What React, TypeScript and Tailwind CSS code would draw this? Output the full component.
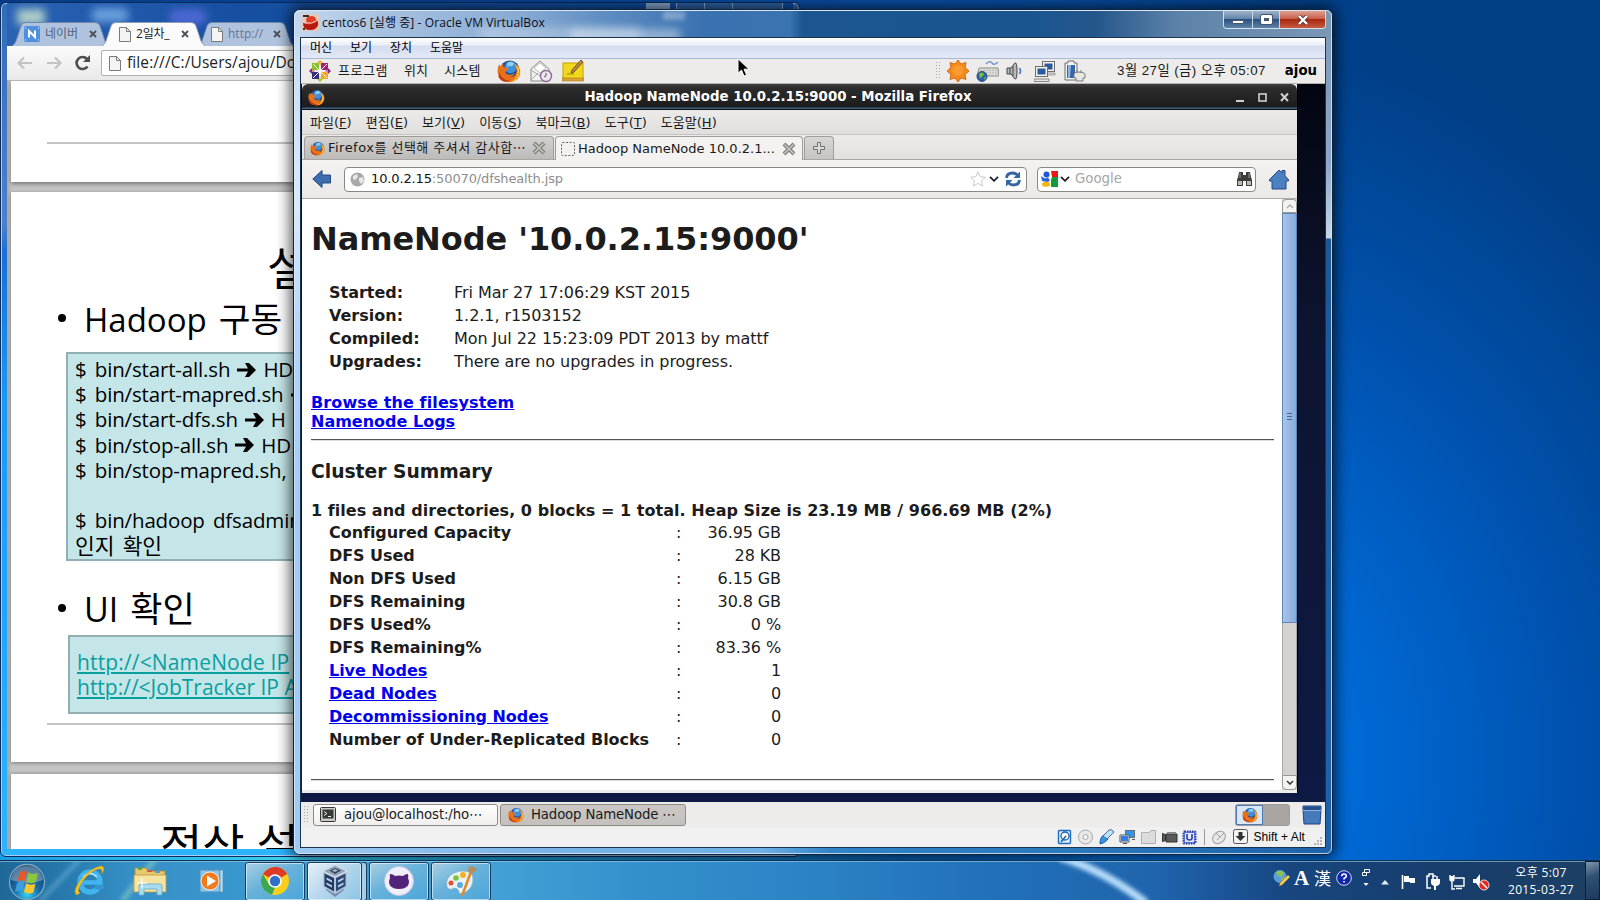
import React from "react";

const FirefoxIcon = ({ s }: { s: number }) => (
  <svg width={s} height={s} viewBox="0 0 32 32" className="shrink-0">
    <circle cx="17" cy="15" r="13" fill="#1d4f9c" />
    <circle cx="18" cy="11" r="8" fill="#3f8fdc" />
    <path d="M14 5q6-3 9 1l-3 4-4-1-3 3z" fill="#8fd0f5" />
    <path d="M3 7l2 3 3-4 1 5q5 0 6 3l-4 3q1 4 6 4 4 0 6-3-1 6-7 6 8 1 10-7 1-6-3-11 8 4 8 12-1 12-14 13Q4 31 1 19 0 12 3 7z" fill="#e8711a" />
    <path d="M23 6q8 5 7 13-2 10-12 12 9-5 9-14 0-6-4-11z" fill="#fbb829" />
    <path d="M3 18q3 10 14 11-10 4-15-5z" fill="#c23b12" />
  </svg>
);

const PageIcon = () => (
  <svg width="12" height="15" viewBox="0 0 12 15" className="shrink-0">
    <path d="M.5.5h7l4 4v10H.5z" fill="#f4f4f4" stroke="#7a7a7a" />
    <path d="M7.500.5v4h4" fill="none" stroke="#7a7a7a" />
  </svg>
);

const TabX = () => (
  <svg width="8" height="8" viewBox="0 0 8 8" className="shrink-0">
    <path d="M1 1l6 6M7 1L1 7" stroke="#4c4f55" strokeWidth="1.800" />
  </svg>
);

const ChromeTab = ({ w, active, children, className = "" }: { w: number; active?: boolean; children: React.ReactNode; className?: string }) => (
  <div className={"relative flex h-6 shrink-0 items-center " + className} style={{ width: w }}>
    <svg className="absolute inset-0" width={w} height="24" viewBox={`0 0 ${w} 24`}>
      <path
        d={`M0 24Q3 22 4 19L9 4Q10 .5 14 .5H${w - 14}Q${w - 10} .5 ${w - 9} 4L${w - 4} 19Q${w - 3} 22 ${w} 24`}
        fill={active ? "#fbfbfb" : "#afc3de"}
        stroke={active ? "#8a9cb8" : "#7088ad"}
      />
    </svg>
    <div className="relative flex w-full items-center">{children}</div>
  </div>
);

const FFX = () => (
  <svg width="14" height="14" viewBox="0 0 14 14" className="shrink-0">
    <path d="M2 2l10 10M12 2L2 12" stroke="#80807c" strokeWidth="4" />
    <path d="M2.500 2.500l9 9M11.500 2.500l-9 9" stroke="#c4c4c1" strokeWidth="1.600" />
  </svg>
);

const Chevron = () => (
  <svg width="10" height="6" viewBox="0 0 10 6" className="shrink-0">
    <path d="M1 .8l4 4 4-4" fill="none" stroke="#222" strokeWidth="1.800" />
  </svg>
);

const Grip = () => (
  <svg width="6" height="18" viewBox="0 0 6 18" className="shrink-0">
    {[0, 3, 6, 9, 12, 15].map((y) => (
      <path key={y} d={`M0 ${y + 0.5}h1M3 ${y + 0.5}h1`} stroke="#a9a7a3" />
    ))}
  </svg>
);

const CentosLogo = () => (
  <svg width="22" height="22" viewBox="0 0 22 22" className="shrink-0">
    <path d="M11 0l3 3-3 3-3-3z" fill="#efa724" />
    <path d="M22 11l-3-3-3 3 3 3z" fill="#932279" />
    <path d="M11 22l3-3-3-3-3 3z" fill="#9ccd2a" />
    <path d="M0 11l3-3 3 3-3 3z" fill="#932279" />
    <path d="M3 3h7v7H3z" fill="#8cc02c" />
    <path d="M12 3h7v7h-7z" fill="#a3247f" />
    <path d="M3 12h7v7H3z" fill="#34307f" />
    <path d="M12 12h7v7h-7z" fill="#efa724" />
    <path d="M4 4l14 14M18 4L4 18M11 3v16M3 11h16" stroke="#f5f3ef" strokeWidth="1" />
  </svg>
);

const MailIcon = () => (
  <svg width="23" height="23" viewBox="0 0 23 23" className="shrink-0">
    <path d="M1 9L10 1l9 8v12H1z" fill="#f2f2f0" stroke="#8a8a86" />
    <path d="M4 8l6-5 6 5-6 5z" fill="#fff" stroke="#bdbdb8" />
    <path d="M1 20l7-7M1 10l9 6 4-3" fill="none" stroke="#a6a6a0" />
    <circle cx="16" cy="16" r="5.500" fill="#eee6ee" stroke="#8d6a97" strokeWidth="1.400" />
    <path d="M16 13v3l-2 1" fill="none" stroke="#555" />
  </svg>
);

const NoteIcon = () => (
  <svg width="22" height="22" viewBox="0 0 22 22" className="shrink-0">
    <rect x="1" y="3" width="20" height="16" fill="#f1d81c" stroke="#c4a000" />
    <rect x="0.500" y="18" width="21" height="3" fill="#d9a432" stroke="#a4761c" strokeWidth=".6" />
    <path d="M19 0l2 2-9 10-3 1 1-3z" fill="#b98a4a" stroke="#5c3d14" strokeWidth=".8" />
    <path d="M5 14h7" stroke="#9b8500" />
  </svg>
);

const SunIcon = () => (
  <svg width="22" height="22" viewBox="0 0 22 22" className="shrink-0">
    <path d="M11 0l3 4 5-1.500-.8 5L22 11l-3.800 3.500.8 5-5-1.500-3 4-3-4-5 1.500.8-5L0 11l3.800-3.500L3 2.500 8 4z" fill="#f58a1c" stroke="#c75f06" strokeWidth=".8" />
    <circle cx="11" cy="10.500" r="5.500" fill="#fb9a30" />
  </svg>
);

const KeyboardIcon = () => (
  <svg width="23" height="22" viewBox="0 0 23 22" className="shrink-0">
    <path d="M10 4q4-4 6-1t6-1" fill="none" stroke="#6f9bd0" strokeWidth="1.500" />
    <path d="M3 8h19l1 8H1z" fill="#dcdcd8" stroke="#8a8a86" />
    <path d="M4 10.500h17M4 13h17" stroke="#b4b4b0" strokeDasharray="2 1" />
    <circle cx="6" cy="16.500" r="5" fill="#2b62ae" stroke="#173c74" strokeWidth=".8" />
    <path d="M3 14q3-3 5 0l-2 3-2 1zM8 18l2-2-1 4z" fill="#7fc03a" />
  </svg>
);

const SpeakerIcon = () => (
  <svg width="17" height="20" viewBox="0 0 17 20" className="shrink-0">
    <path d="M1 7h4l4-5q2-1 2 8t-2 8l-4-5H1z" fill="#b8bab5" stroke="#44474a" />
    <path d="M4 7v6M7 5v10" stroke="#44474a" />
    <path d="M13.500 7q2 3 0 6" fill="none" stroke="#4b7fc4" strokeWidth="1.600" />
  </svg>
);

const MonitorsIcon = () => (
  <svg width="22" height="22" viewBox="0 0 22 22" className="shrink-0">
    <rect x="8.500" y="1.500" width="12" height="10" fill="#f3f3f1" stroke="#6c6e6a" />
    <rect x="10.500" y="3.500" width="8" height="6" fill="#2c5aa0" />
    <path d="M12 13h9v2h-9z" fill="#d5d5d0" stroke="#7c7e7a" strokeWidth=".6" />
    <rect x="1.500" y="6.500" width="12" height="10" fill="#f3f3f1" stroke="#6c6e6a" />
    <rect x="3.500" y="8.500" width="8" height="6" fill="#2c5aa0" />
    <path d="M0 19h15v2.500H0z" fill="#e6e6e2" stroke="#6c6e6a" strokeWidth=".8" />
  </svg>
);

const BatteryIcon = () => (
  <svg width="22" height="22" viewBox="0 0 22 22" className="shrink-0">
    <path d="M4 1h6v2h3v17H1V3h3z" fill="#f3f3f1" stroke="#6c6e6a" />
    <rect x="3" y="5" width="8" height="13" fill="#3465a4" />
    <path d="M4 5h3l-1 13H4z" fill="#8fb4e0" />
    <path d="M13 10v3M17 10v3M10 14q0-2 5-2t6 2v4h-2v3h-7v-3h-2z" fill="#e6e6e2" stroke="#7c7e7a" />
  </svg>
);

const Arrow = () => (
  <svg width="19" height="16" viewBox="0 0 19 16" className="mx-[7px] shrink-0">
    <path d="M0 6.500h11L8 1h4l7 7-7 7H8l3-5.500H0z" fill="#000" />
  </svg>
);

const ChromeWindow = () => (
  <div className="absolute left-0 top-[2px] flex h-[855px] w-[800px] flex-col overflow-hidden rounded-[6px] border border-[#0b2c5c] bg-[linear-gradient(180deg,#2f6bb8_0,#3b72bb_60px,#4a82cc_220px,#176fdb_250px,#189af2_400px,#1fa8ff_650px,#2cb4ff_100%)] px-[6px] pb-[7px] shadow-[inset_0_0_0_1px_#a8cdf2]">
    <div className="relative flex h-[43px] shrink-0 items-end bg-[linear-gradient(90deg,#2a63b4,#164fa0_30%,#0f4fa8)] pl-[5px]">
      <div className="absolute left-[10px] top-[6px] h-[16px] w-[28px] bg-[#cfe8d0] opacity-80 blur-[4px]" />
      <div className="absolute left-[84px] top-[5px] h-[14px] w-[38px] rounded-full bg-[#7fb2ea] opacity-80 blur-[4px]" />
      <div className="absolute left-[162px] top-[6px] h-[16px] w-[38px] rounded-full bg-[#5a6ee0] opacity-80 blur-[4px]" />
      <ChromeTab w={97}>
        <svg width="16" height="16" viewBox="0 0 16 16" className="ml-[12px] shrink-0">
          <rect width="16" height="16" rx="1.500" fill="#4e90df" />
          <path d="M5 11.500V5l6 6V4.500" fill="none" stroke="#fff" strokeWidth="2" />
          <path d="M1 2h1M14 2h1M1 14h1M14 14h1" stroke="#fff" />
        </svg>
        <span className="ml-[5px] w-[35px] overflow-hidden whitespace-nowrap font-['Open_Sans','Noto_Sans_CJK_KR',sans-serif] text-[12px] leading-[16px] text-[#55627a]">네이버</span>
        <span className="ml-[9px] flex"><TabX /></span>
      </ChromeTab>
      <ChromeTab w={103} active className="z-10 -ml-[7px]">
        <span className="ml-[17px] flex"><PageIcon /></span>
        <span className="ml-[5px] w-[38px] overflow-hidden whitespace-nowrap font-['Open_Sans','Noto_Sans_CJK_KR',sans-serif] text-[12px] leading-[16px] tracking-[-0.2px] text-[#222]">2일차_</span>
        <span className="ml-[7px] flex"><TabX /></span>
      </ChromeTab>
      <ChromeTab w={96} className="-ml-[7px]">
        <span className="ml-[13px] flex"><PageIcon /></span>
        <span className="ml-[5px] w-[38px] overflow-hidden whitespace-nowrap font-['Open_Sans','Noto_Sans_CJK_KR',sans-serif] text-[12px] leading-[16px] text-[#66748c]">http://</span>
        <span className="ml-[7px] flex"><TabX /></span>
      </ChromeTab>
      <div className="absolute right-[10px] top-0 flex h-[17px] gap-[6px]">
        <div className="w-[24px] border border-t-0 border-[#8fb0d8] bg-[#8aa9d0]" />
        <div className="flex w-[107px] divide-x divide-[#8fb0d8] rounded-b border border-t-0 border-[#8fb0d8] bg-[#2f66aa]">
          <div className="w-[28px]" />
          <div className="w-[28px]" />
          <div className="flex-1" />
        </div>
      </div>
    </div>
    <div className="flex h-[35px] shrink-0 items-center border-b border-[#b6b6b6] bg-[linear-gradient(180deg,#fbfbfb,#e9e9e9)] pl-[10px]">
      <svg width="16" height="14" viewBox="0 0 16 14"><path d="M15 7H2M7 1.500L1.500 7 7 12.500" fill="none" stroke="#c2c2c2" strokeWidth="2.200" /></svg>
      <svg width="16" height="14" viewBox="0 0 16 14" className="ml-[13px]"><path d="M1 7h13M9 1.500L14.500 7 9 12.500" fill="none" stroke="#c2c2c2" strokeWidth="2.200" /></svg>
      <svg width="17" height="16" viewBox="0 0 17 16" className="ml-[12px]"><path d="M13.500 11.500A6 6 0 1 1 13 4" fill="none" stroke="#4d4d4d" strokeWidth="2.600" /><path d="M16 0v7H9z" fill="#4d4d4d" /></svg>
      <div className="ml-[10px] flex h-[26px] flex-1 items-center rounded-[2px] border border-[#b0b0b0] bg-white pl-[7px]">
        <PageIcon />
        <span className="ml-[6px] whitespace-nowrap font-['Open_Sans','Noto_Sans_CJK_KR',sans-serif] text-[15.500px] tracking-[0.1px] text-[#222]">file:///C:/Users/ajou/Do</span>
      </div>
    </div>
    <div className="flex min-h-0 flex-1 flex-col overflow-hidden bg-[linear-gradient(90deg,#a9a9a9,#c6c6c6_5px)] pl-[4px] font-['Open_Sans','Noto_Sans_CJK_KR',sans-serif] text-black">
      <div className="h-[101px] shrink-0 bg-white pl-[36px] pt-[61px] shadow-[0_2px_4px_#777]">
        <div className="h-[2px] bg-[#c4c4c4]" />
      </div>
      <div className="mt-[10px] flex h-[570px] shrink-0 flex-col bg-white shadow-[0_1px_4px_#777]">
        <div className="ml-[256px] mt-[47px] h-[56px] whitespace-nowrap text-[46px] leading-[56px]">설</div>
        <div className="mt-[2px] flex h-[44px] items-center pl-[47px]">
          <div className="mb-[2px] h-[8px] w-[8px] shrink-0 rounded-full bg-black" />
          <span className="ml-[18px] whitespace-nowrap text-[33px] leading-[44px]">Hadoop<span className="ml-[12px] text-[34.500px]">구동</span></span>
        </div>
        <div className="ml-[55px] mt-[11px] h-[209px] border-2 border-[#92b0b4] bg-[#c5e6e8] pl-[7px] pt-[3px] text-[20.500px] leading-[25.200px] tracking-[-0.15px] [word-spacing:3px]">
          <div className="flex items-center whitespace-pre">$ bin/start-all.sh<Arrow />HD</div>
          <div className="flex items-center whitespace-pre">$ bin/start-mapred.sh<Arrow /></div>
          <div className="flex items-center whitespace-pre">$ bin/start-dfs.sh<Arrow />H</div>
          <div className="flex items-center whitespace-pre">$ bin/stop-all.sh<Arrow />HD</div>
          <div className="whitespace-pre">$ bin/stop-mapred.sh,</div>
          <div className="h-[25px]" />
          <div className="whitespace-pre">$ bin/hadoop dfsadmin</div>
          <div className="whitespace-pre text-[21.500px]">인지 확인</div>
        </div>
        <div className="mt-[26px] flex h-[44px] items-center pl-[47px]">
          <div className="mb-[2px] h-[8px] w-[8px] shrink-0 rounded-full bg-black" />
          <span className="ml-[18px] whitespace-nowrap text-[34px] leading-[44px]">UI<span className="ml-[12px] text-[35px]">확인</span></span>
        </div>
        <div className="ml-[57px] mt-[4px] h-[79px] border-2 border-[#92b0b4] bg-[#c5e6e8] pl-[7px] pt-[13px] text-[21px] leading-[25.200px] text-[#0a9f9f]">
          <div className="whitespace-pre tracking-[0.15px] underline">{"http://<NameNode IP"}</div>
          <div className="whitespace-pre underline">{"http://<JobTracker IP A"}</div>
        </div>
        <div className="ml-[36px] mt-[9px] h-[2px] shrink-0 bg-[#c4c4c4]" />
      </div>
      <div className="mt-[12px] h-[200px] shrink-0 bg-white pl-[149px] pt-[42px] shadow-[0_0_4px_#777]">
        <div className="whitespace-nowrap text-[46px] leading-[56px]">정상 설</div>
      </div>
    </div>
  </div>
);

const info: [string, string][] = [
  ["Started:", "Fri Mar 27 17:06:29 KST 2015"],
  ["Version:", "1.2.1, r1503152"],
  ["Compiled:", "Mon Jul 22 15:23:09 PDT 2013 by mattf"],
  ["Upgrades:", "There are no upgrades in progress."],
];

const summary: [string, string, boolean][] = [
  ["Configured Capacity", "36.95 GB", false],
  ["DFS Used", "28 KB", false],
  ["Non DFS Used", "6.15 GB", false],
  ["DFS Remaining", "30.8 GB", false],
  ["DFS Used%", "0 %", false],
  ["DFS Remaining%", "83.36 %", false],
  ["Live Nodes", "1", true],
  ["Dead Nodes", "0", true],
  ["Decommissioning Nodes", "0", true],
  ["Number of Under-Replicated Blocks", "0", false],
];

const menus: [string, string][] = [
  ["파일", "F"],
  ["편집", "E"],
  ["보기", "V"],
  ["이동", "S"],
  ["북마크", "B"],
  ["도구", "T"],
  ["도움말", "H"],
];

const Firefox = () => (
  <div className="ml-px flex h-[709px] w-[996px] flex-col border-r border-black bg-[#edecea]">
    <div className="flex h-[26px] shrink-0 items-center rounded-t-[6px] border-b border-[#0d1218] bg-[linear-gradient(180deg,#3f3f3f,#2d2d2d_15%,#1c1c1c_90%,#48709c)] pt-px text-[#ccc]">
      <span className="ml-[6px] flex"><FirefoxIcon s={17} /></span>
      <span className="ml-[62px] flex-1 whitespace-nowrap pr-[66px] text-center text-[13.330px] font-bold text-white">Hadoop NameNode 10.0.2.15:9000 - Mozilla Firefox</span>
      <svg width="54" height="12" viewBox="0 0 54 12" className="mr-[8px] shrink-0">
        <path d="M1 9h8v2H1z" fill="#d0d0cc" />
        <rect x="24" y="3" width="7" height="7" fill="none" stroke="#d0d0cc" strokeWidth="1.600" />
        <path d="M46 2.500l7 7.500M53 2.500L46 10" stroke="#d0d0cc" strokeWidth="2" />
      </svg>
    </div>
    <div className="flex h-[25px] shrink-0 items-center gap-[14px] border-b border-[#c5c3c0] bg-[linear-gradient(180deg,#ecebea,#e0dfdd)] pl-[8px] pt-[2px] text-[13px] tracking-[0.02px] text-[#1a1a1a]">
      {menus.map(([a, b]) => (
        <span key={b} className="whitespace-nowrap">{a}(<u className="underline-offset-1">{b}</u>)</span>
      ))}
    </div>
    <div className="flex h-[25px] shrink-0 items-end border-b border-[#a9a6a2] bg-[linear-gradient(180deg,#ecebea,#e2e1df)] pl-[2px] text-[13px] text-[#1a1a1a]">
      <div className="flex h-[23px] w-[250px] shrink-0 items-center rounded-t-[4px] border border-b-0 border-[#a09d99] bg-[linear-gradient(180deg,#d3d1cf,#bdbbb9)] pl-[5px]">
        <FirefoxIcon s={15} />
        <span className="ml-[3px] w-[202px] overflow-hidden whitespace-nowrap tracking-[0.48px]">Firefox를 선택해 주셔서 감사합⋯</span>
        <span className="ml-[2px] flex"><FFX /></span>
      </div>
      <div className="-mb-px ml-px flex h-[24px] w-[248px] shrink-0 items-center rounded-t-[4px] border border-b-0 border-[#a09d99] bg-[#f3f2f1] pl-[5px]">
        <svg width="14" height="14" viewBox="0 0 14 14" className="shrink-0"><rect x=".5" y=".5" width="13" height="13" rx="1" fill="none" stroke="#666" strokeDasharray="2 1.500" /></svg>
        <span className="ml-[3px] w-[203px] whitespace-nowrap">Hadoop NameNode 10.0.2.1...</span>
        <span className="ml-[1px] flex"><FFX /></span>
      </div>
      <div className="ml-px flex h-[23px] w-[30px] items-center justify-center rounded-t-[4px] border border-b-0 border-[#a09d99] bg-[linear-gradient(180deg,#d9d7d5,#c6c4c2)]">
        <svg width="12" height="12" viewBox="0 0 12 12"><path d="M4.500.5h3v4h4v3h-4v4h-3v-4h-4v-3h4z" fill="#ddd" stroke="#6f6f6c" /></svg>
      </div>
    </div>
    <div className="flex h-[39px] shrink-0 items-center border-b border-[#aeaba7] bg-[linear-gradient(180deg,#f3f2f1,#eae9e7)]">
      <svg width="19" height="20" viewBox="0 0 19 20" className="ml-[10px] shrink-0"><path d="M.8 10L10 1.500V6h8.500v8H10v4.500z" fill="#3d6fae" stroke="#204a87" /></svg>
      <div className="ml-[13px] flex h-[25px] w-[683px] shrink-0 items-center rounded-[4px] border-[1.500px] border-[#8a8884] bg-white pl-[5px]">
        <svg width="15" height="15" viewBox="0 0 15 15" className="shrink-0"><circle cx="7.500" cy="7.500" r="7" fill="#a8a8a8" /><path d="M3 4l4-2 1 3-3 3-2-1zM9 6l4-1 1 4-3 3-2-3z" fill="#e8e8e8" /></svg>
        <span className="ml-[6px] flex-1 whitespace-nowrap text-[13px] tracking-[-0.13px] text-[#8d8d8d]"><span className="text-[#111]">10.0.2.15</span>:50070/dfshealth.jsp</span>
        <svg width="16" height="16" viewBox="0 0 16 16" className="shrink-0"><path d="M8 .8l2.200 4.900 5.200.6-3.900 3.500 1.100 5.200L8 12.400 3.400 15l1.100-5.200L.6 6.300l5.200-.6z" fill="#fff" stroke="#c9c9c9" /></svg>
        <span className="ml-[3px] flex"><Chevron /></span>
        <svg width="16" height="16" viewBox="0 0 16 16" className="ml-[6px] mr-[5px] shrink-0"><path d="M1.500 7Q2 2 7.500 2q3 0 5 2" fill="none" stroke="#3465a4" strokeWidth="2.800" /><path d="M15 .5v6.500H8.500z" fill="#3465a4" /><path d="M14.500 9Q14 14 8.500 14q-3 0-5-2" fill="none" stroke="#3465a4" strokeWidth="2.800" /><path d="M1 15.500V9h6.500z" fill="#3465a4" /></svg>
      </div>
      <div className="ml-[10px] flex h-[25px] w-[219px] shrink-0 items-center rounded-[4px] border-[1.500px] border-[#8a8884] bg-white pl-[3px]">
        <svg width="17" height="16" viewBox="0 0 17 16" className="shrink-0"><rect width="17" height="16" fill="#fff" /><path d="M10 0h7v6h-6z" fill="#f01414" /><path d="M11 6h6v10h-7V9z" fill="#0f9d3a" /><circle cx="5.500" cy="3.500" r="3" fill="#1d57d6" /><path d="M0 5l3 2q3 1 4-1l2 4-3 1-5-1z" fill="#2a62da" /><ellipse cx="5" cy="13.300" rx="4" ry="2.500" fill="#f4b400" /></svg>
        <span className="ml-[2px] flex"><Chevron /></span>
        <span className="ml-[5px] flex-1 text-[13.300px] text-[#a6a6a6]">Google</span>
        <svg width="17" height="16" viewBox="0 0 17 16" className="mr-[2px] shrink-0"><path d="M3 1h4v3h3V1h4l1 5 1 3v6h-6v-5H7v5H1V9l1-3z" fill="#3b3d3c" /><rect x="2" y="10" width="4" height="4" fill="#b9bdb6" /><rect x="11" y="10" width="4" height="4" fill="#b9bdb6" /><path d="M4 2v5M13 2v5" stroke="#9a9d98" /></svg>
      </div>
      <svg width="20" height="21" viewBox="0 0 20 21" className="ml-[13px] shrink-0"><path d="M10 1l3 3V1.500h3V7l3.500 3.500V12H17v8H3v-8H.5v-1.500z" fill="#4b80c2" stroke="#204a87" /></svg>
    </div>
    <div className="flex h-[591px] shrink-0">
      <div className="flex w-[980px] flex-col bg-white pl-[9px] text-[16px] leading-[19px] text-[#1c1c1c]">
        <h1 className="mt-[22px] whitespace-nowrap text-[32px] font-bold leading-[37px] tracking-[-0.08px]">NameNode '10.0.2.15:9000'</h1>
        <div className="mt-[23px] grid grid-cols-[125px_1fr] pl-[18px] leading-[23px]">
          {info.map(([k, v]) => (
            <React.Fragment key={k}>
              <span className="font-bold">{k}</span>
              <span className="tracking-[-0.06px]">{v}</span>
            </React.Fragment>
          ))}
        </div>
        <div className="mt-[20px] flex flex-col items-start font-bold text-[#0000ee] underline">
          <a className="tracking-[0.12px]">Browse the filesystem</a>
          <a>Namenode Logs</a>
        </div>
        <div className="mt-[8px] h-[2px] w-[963px] shrink-0 border-b border-t border-b-[#ddd] border-t-[#555]" />
        <h3 className="mt-[20px] text-[18.720px] font-bold leading-[22px]">Cluster Summary</h3>
        <div className="mt-[18px] whitespace-nowrap font-bold tracking-[0.035px]">1 files and directories, 0 blocks = 1 total. Heap Size is 23.19 MB / 966.69 MB (2%)</div>
        <div className="mt-px flex flex-col pl-[18px] leading-[23px]">
          {summary.map(([k, v, link]) => (
            <div key={k} className="grid grid-cols-[347px_15px_90px]">
              <span className="font-bold tracking-[-0.05px]">{link ? <a className="text-[#0000ee] underline">{k}</a> : k}</span>
              <span>:</span>
              <span className="text-right tracking-[-0.1px]">{v}</span>
            </div>
          ))}
        </div>
        <div className="mt-[28px] h-[2px] w-[963px] shrink-0 border-b border-t border-b-[#ddd] border-t-[#555]" />
      </div>
      <div className="flex w-[15px] flex-col bg-[#d3d2d0]">
        <div className="flex h-[14px] items-center justify-center rounded-t-[4px] border border-[#9a9894] bg-[#f3f3f2]">
          <svg width="8" height="5" viewBox="0 0 8 5"><path d="M1 4l3-3 3 3" fill="none" stroke="#aaa" strokeWidth="1.300" /></svg>
        </div>
        <div className="flex h-[410px] flex-col items-center justify-center gap-[2px] border border-[#5f86b8] bg-[linear-gradient(90deg,#a9c4e8,#86abdc)] pb-[4px]">
          <div className="h-px w-[5px] bg-[#42689c]" />
          <div className="h-px w-[5px] bg-[#42689c]" />
          <div className="h-px w-[5px] bg-[#42689c]" />
        </div>
        <div className="flex-1 border-x border-[#a9a7a4]" />
        <div className="flex h-[15px] items-center justify-center rounded-b-[4px] border border-[#9a9894] bg-[#f3f3f2]">
          <svg width="8" height="5" viewBox="0 0 8 5"><path d="M1 1l3 3 3-3" fill="none" stroke="#333" strokeWidth="1.500" /></svg>
        </div>
      </div>
    </div>
  </div>
);

const StatusIcons = () => (
  <svg width="171" height="18" viewBox="0 0 171 18" className="shrink-0">
    <rect x="1.500" y="2.500" width="12" height="13" rx="1" fill="#dceeff" stroke="#1f6cc0" strokeWidth="1.400" />
    <circle cx="8" cy="8" r="4" fill="#fff" stroke="#1b5faa" strokeWidth="1.300" />
    <path d="M4 14l5-6" stroke="#1b5faa" strokeWidth="1.500" />
    <circle cx="28.500" cy="9" r="7" fill="#e8e8e8" stroke="#a8a8a8" />
    <circle cx="28.500" cy="9" r="2.500" fill="#f8f8f8" stroke="#a8a8a8" />
    <path d="M43 16q0-7 4-9l4 4q-3 4-8 5z" fill="#2f97ee" stroke="#125a9f" />
    <path d="M46 8l6-6q3-1 4 1l1 1-7 7z" fill="#bfe0fa" stroke="#3a6b9c" />
    <rect x="68.500" y="2.500" width="9" height="7" fill="#2f97ee" stroke="#6c6c6c" />
    <rect x="63.500" y="7.500" width="8" height="6" fill="#2f7fe8" stroke="#f5f5f5" />
    <path d="M63 7h9v7h-9zM66 15.500h4M75 11.500h3" fill="none" stroke="#555" />
    <path d="M84.500 15.500v-11h8l1-2h5v13z" fill="#dcdcdc" stroke="#b0b0b0" />
    <path d="M105.500 5.500l3 1v6l-3 1zM109 6h11v8h-11z" fill="#5a5a5a" stroke="#333" />
    <path d="M110 4h9v1h-9z" fill="#888" />
    <rect x="126.500" y="3.500" width="12" height="12" rx="1" fill="#6d86e8" stroke="#2a3f9c" strokeDasharray="1.500 1" strokeWidth="2" />
    <rect x="128" y="5" width="9" height="9" fill="#dfe6ff" />
    <path d="M130 6v4q0 2 2.500 2t2.500-2V6" fill="none" stroke="#2a3f9c" strokeWidth="1.600" />
    <path d="M147.500 1v16" stroke="#9a9a9a" />
    <ellipse cx="162" cy="9.500" rx="7" ry="5.500" transform="rotate(-40 162 9.500)" fill="#e6e6e6" stroke="#9f9f9f" />
    <path d="M159 5l4 4 4-4M163 9l-3 3" fill="none" stroke="#9f9f9f" />
  </svg>
);

const VMWindow = () => (
  <div className="absolute left-[293px] top-[9px] flex h-[846px] w-[1040px] flex-col rounded-[7px] border border-[#10253d] bg-[linear-gradient(180deg,#c5dbf3_0,#dbe9f8_200px,#b4d5fb_320px,#a4ccf3_500px,#9ecaf2_100%)] shadow-[0_0_14px_3px_rgba(0,0,0,0.65)]">
    <div className="absolute right-0 top-0 h-full w-[9px] rounded-r-[6px] bg-[linear-gradient(180deg,#7d99ba_0,#8aa6c8_150px,#c3d6ea_228px,#1b5897_229px,#1d62ab_100%)]" />
    <div className="absolute bottom-0 left-0 h-[8px] w-full rounded-b-[6px] bg-[linear-gradient(90deg,#9ecaf2,#79b2e6_25%,#6fb0e6_45%,#2f83c8_52%,#2a78bd_75%,#1d62ab)]" />
    <div className="relative flex h-full flex-col rounded-[6px] border border-[#dceaf7]/80 px-[5px] pb-[5px]">
      <div className="relative -mx-[5px] flex h-[26px] shrink-0 items-start overflow-hidden rounded-t-[6px] bg-[linear-gradient(90deg,#c3d7ec_0,#a6c1e0_90px,#86a9d2_230px,#5e8dc2_310px,#3a71b0_410px,#3a74b0_495px,#1c5590_508px,#1b558f_740px,#24568c_800px,#5c81a8_880px,#7b98b6_100%)]">
        <div className="absolute left-[185px] top-[16px] h-[14px] w-[160px] bg-white opacity-30 blur-[5px]" />
        <div className="absolute left-[275px] top-[18px] h-[14px] w-[110px] bg-white opacity-40 blur-[4px]" />
        <div className="absolute left-[368px] top-0 h-[9px] w-[22px] bg-white opacity-30 blur-[2px]" />
        <svg width="17" height="17" viewBox="0 0 17 17" className="relative ml-[7px] mt-[3px] shrink-0">
          <rect width="17" height="17" fill="#e2c9bd" />
          <path d="M4 5q3-5 9-2l2 5-3 2H5z" fill="#e23c22" />
          <path d="M1 9q8 3 15-2 1 8-6 9-9 1-9-7z" fill="#b51a0b" />
          <path d="M5 9q5 1 9-2" stroke="#ffd8cc" fill="none" />
          <path d="M1 1h6v2H1zM1 14h2v2H1z" fill="#3a2a28" />
        </svg>
        <span className="relative ml-[3px] mt-[3px] whitespace-nowrap font-['Open_Sans','Noto_Sans_CJK_KR',sans-serif] text-[12px] leading-[17px] tracking-[0.09px] text-[#0c0c14]">centos6 [실행 중] - Oracle VM VirtualBox</span>
        <div className="relative ml-auto mr-[5px] flex h-[18px] w-[103px] divide-x divide-[#ccd8e6] overflow-hidden rounded-b-[4px] border border-t-0 border-[#d4e0ec]">
          <div className="flex w-[29px] justify-center bg-[linear-gradient(180deg,#9eb2c9,#6585a8_45%,#2a5280_50%,#5f83a9)] pt-[9px]"><div className="h-[4px] w-[12px] rounded-[1px] border border-[#44566c] bg-white" /></div>
          <div className="flex w-[27px] items-center justify-center bg-[linear-gradient(180deg,#9eb2c9,#6585a8_45%,#2a5280_50%,#5f83a9)]"><div className="h-[9px] w-[11px] rounded-[1px] border-[3px] border-white bg-[#44566c] outline outline-[#44566c]" /></div>
          <div className="flex flex-1 items-center justify-center bg-[linear-gradient(180deg,#dfa092,#c8604a_45%,#a82810_50%,#c75a40)]">
            <svg width="12" height="10" viewBox="0 0 12 10"><path d="M2 1l8 8M10 1L2 9" stroke="#50342f" strokeWidth="4" /><path d="M2 1l8 8M10 1L2 9" stroke="#fff" strokeWidth="2.400" /></svg>
          </div>
        </div>
      </div>
      <div className="flex min-h-0 flex-1 flex-col border border-[#1b3550] bg-[#f0f0f0]">
        <div className="flex h-[21px] shrink-0 items-center gap-[15px] border-b border-[#a9b8d4] bg-[linear-gradient(180deg,#fff,#e9eef8_35%,#d4dcee_40%,#e2e8f6)] pl-[9px] font-['Open_Sans','Noto_Sans_CJK_KR',sans-serif] text-[12px] leading-[18px] text-black">
          {["머신", "보기", "장치", "도움말"].map((m) => (
            <span key={m} className="min-w-[25px] whitespace-nowrap">{m}</span>
          ))}
        </div>
        <div className="flex h-[768px] shrink-0 flex-col bg-[linear-gradient(180deg,#02040c,#0d1430_35%,#0e1a45)] font-['DejaVu_Sans','Noto_Sans_CJK_KR',sans-serif]">
          <div className="flex h-[25px] shrink-0 items-center border-b border-[#b3b1ad] bg-[#edecea] text-[13px] text-[#1a1a1a]">
            <span className="ml-[8px] flex"><CentosLogo /></span>
            <span className="ml-[7px] w-[52px] whitespace-nowrap tracking-[0.5px]">프로그램</span>
            <span className="ml-[14px] w-[26px] whitespace-nowrap">위치</span>
            <span className="ml-[14px] w-[40px] whitespace-nowrap tracking-[0.3px]">시스템</span>
            <span className="ml-[13px] flex"><FirefoxIcon s={24} /></span>
            <span className="ml-[9px] flex"><MailIcon /></span>
            <span className="ml-[9px] flex"><NoteIcon /></span>
            <span className="ml-[352px] flex"><Grip /></span>
            <span className="ml-[5px] flex"><SunIcon /></span>
            <span className="ml-[7px] flex"><KeyboardIcon /></span>
            <span className="ml-[7px] flex"><SpeakerIcon /></span>
            <span className="ml-[11px] flex"><MonitorsIcon /></span>
            <span className="ml-[8px] flex"><BatteryIcon /></span>
            <span className="ml-auto whitespace-nowrap font-['Liberation_Sans','Noto_Sans_CJK_KR',sans-serif] text-[13.300px] tracking-[0.45px]">3월 27일 (금) 오후 05:07</span>
            <span className="ml-[19px] mr-[8px] text-[13.300px] font-bold text-black">ajou</span>
          </div>
          <Firefox />
          <div className="h-[9px] shrink-0" />
          <div className="flex h-[25px] shrink-0 items-center bg-[#edecea] text-[13.300px] text-[#1a1a1a]">
            <span className="ml-[3px] flex"><Grip /></span>
            <div className="ml-[3px] flex h-[22px] w-[185px] shrink-0 items-center rounded-[3px] border border-[#8e8b87] bg-[linear-gradient(180deg,#fff,#f0efee)] pl-[6px]">
              <svg width="16" height="15" viewBox="0 0 16 15" className="shrink-0"><rect x=".5" y=".5" width="15" height="14" rx="1" fill="#c9cbc7" stroke="#333" /><rect x="2.500" y="2.500" width="11" height="9" fill="#333a36" /><path d="M4 4.500l3 2-3 2M8 9.500h3" stroke="#eee" fill="none" /></svg>
              <span className="ml-[8px] whitespace-nowrap tracking-[-0.1px]">ajou@localhost:/ho⋯</span>
            </div>
            <div className="ml-[2px] flex h-[22px] w-[186px] shrink-0 items-center rounded-[3px] border border-[#8e8b87] bg-[linear-gradient(180deg,#cac7c4,#c3c0bd)] pl-[7px]">
              <FirefoxIcon s={16} />
              <span className="ml-[7px] whitespace-nowrap tracking-[-0.15px]">Hadoop NameNode ⋯</span>
            </div>
            <div className="ml-auto flex h-[22px] w-[55px] rounded-[3px] border border-[#9f9c98] bg-[#a8a5a2]">
              <div className="flex w-[27px] items-center justify-center border border-[#4f7ab5] bg-[#dbe6f4]"><FirefoxIcon s={16} /></div>
            </div>
            <svg width="21" height="22" viewBox="0 0 21 22" className="ml-[12px] mr-[2px] shrink-0"><path d="M1 2h18v4l-1 14H2L1 6z" fill="#4479ba" stroke="#1d4580" /><path d="M2 3h16v3H2z" fill="#244f8c" /><path d="M1 6.500h18" stroke="#8fb4e0" /></svg>
          </div>
        </div>
        <div className="flex flex-1 items-center justify-end font-['Liberation_Sans',sans-serif] text-[12px] text-black">
          <StatusIcons />
          <svg width="15" height="16" viewBox="0 0 15 16" className="ml-[5px] shrink-0"><rect x=".5" y=".5" width="14" height="14" rx="2" fill="#f3f3f3" stroke="#555" /><path d="M5.500 3h4v4h3l-5 5-5-5h3z" fill="#333" /></svg>
          <span className="ml-[5px] whitespace-nowrap tracking-[0.05px]">Shift + Alt</span>
          <svg width="9" height="9" viewBox="0 0 9 9" className="ml-[9px] mr-[2px] mt-[8px] shrink-0"><path d="M6 1h2M3 4h2M6 4h2M0 7h2M3 7h2M6 7h2" stroke="#b5b5b5" strokeWidth="2" /></svg>
        </div>
      </div>
    </div>
  </div>
);

const TaskButton = ({ children, active }: { children: React.ReactNode; active?: boolean }) => (
  <div
    className={
      "flex h-[39px] items-center justify-center rounded-[3px] border border-[#173f63] shadow-[inset_0_0_0_1px_rgba(255,255,255,0.55)] " +
      (active ? "w-[55px] bg-[linear-gradient(135deg,#e6f0f8,#b3d6ec_50%,#8cc4e6)]" : "w-[60px] bg-[linear-gradient(150deg,#a9cfe4,#68b2da_45%,#4ba6da)]")
    }
  >
    {children}
  </div>
);

const Taskbar = () => (
  <div className="absolute bottom-0 left-0 flex h-[40px] w-[1600px] items-center border-t border-[#0b3350] bg-[linear-gradient(90deg,#1f6797_0,#2778ab_60px,#3590c6_130px,#3c9ad0_300px,#45a2d6_480px,#3490cc_640px,#2c84c6_800px,#2170b8_1000px,#1f64ac_1160px,#1c559a_1220px,#17467f_1290px,#173d6b_1450px,#1d4064_1600px)] shadow-[inset_0_1px_0_rgba(160,210,240,0.6)]">
    <svg className="absolute left-0 top-0" width="1600" height="39" viewBox="0 0 1600 39">
      <defs><filter id="b"><feGaussianBlur stdDeviation="2" /></filter></defs>
      <path d="M1060 -4Q1105 10 1146 42" fill="none" stroke="#b5dbfa" strokeWidth="8" filter="url(#b)" />
      <path d="M80 -2L40 40" stroke="#7fc4e6" strokeWidth="5" opacity=".4" filter="url(#b)" />
      <path d="M155 -2L122 40" stroke="#a5dfc0" strokeWidth="5" opacity=".5" filter="url(#b)" />
    </svg>
    <svg width="38" height="38" viewBox="0 0 38 38" className="relative ml-[8px] mt-[2px] shrink-0">
      <defs><radialGradient id="orb" cx=".5" cy=".85" r=".8"><stop offset="0" stopColor="#38d0f5" /><stop offset=".45" stopColor="#176ba5" /><stop offset="1" stopColor="#123f6c" /></radialGradient></defs>
      <circle cx="19" cy="19" r="17.500" fill="url(#orb)" stroke="#7ea7c6" strokeWidth="1.300" />
      <path d="M3 17Q5 3 19 3t16 14Q20 23 3 17z" fill="#fff" opacity=".3" />
      <path d="M11.500 9.500q4-2.500 7.500-.8L17 18q-3.500-1.800-7.500.3z" fill="#e8562a" />
      <path d="M20.300 9.500q4 3 9.700.3L28 19q-5.500 2.500-9.700-.3z" fill="#8cc63c" />
      <path d="M9 20q4-2.300 7.600-.5L14.500 28.500q-3.500-1.600-7.500.6z" fill="#3e9fe0" />
      <path d="M18 20.300q4.500 2.700 9.500.2l-2 9q-5 2.300-9.500-.4z" fill="#f9c62c" />
    </svg>
    <svg width="32" height="32" viewBox="0 0 32 32" className="relative ml-[27px] shrink-0">
      <circle cx="17" cy="17" r="10" fill="none" stroke="#3fb4ee" strokeWidth="5.500" />
      <path d="M8 17.500h20" stroke="#3fb4ee" strokeWidth="4.500" />
      <path d="M22 19.800h9v4.500h-9z" fill="#3594cb" />
      <path d="M10 12q7-7 14 0" fill="none" stroke="#bdeaff" strokeWidth="1.500" />
      <path d="M4 30Q-1 27 7 16 17 3 28 1q5 1 1 8 1-6-4-5Q17 6 9 17q-6 9-2 11z" fill="#f8c51e" stroke="#d69a0a" strokeWidth=".5" />
    </svg>
    <svg width="34" height="30" viewBox="0 0 34 30" className="relative ml-[28px] shrink-0">
      <path d="M2 6V2h11l2 3h17v6H2z" fill="#e7c96c" stroke="#a98b34" strokeWidth=".8" />
      <path d="M5 2h4v2H5z" fill="#4caf50" /><path d="M14 4h5v2h-5z" fill="#d9534f" /><path d="M22 5h5v2h-5z" fill="#4aa0e0" />
      <path d="M1 9h32v17H1z" fill="#f5e3a0" stroke="#b99b45" strokeWidth=".8" />
      <path d="M6 29V20q0-2 2-2h19q2 0 2 2v9h-5v-6H11v6z" fill="#a9dcf2" stroke="#5fa8cc" strokeWidth=".8" />
      <path d="M9 12v10M4 17h10" stroke="#fff" strokeWidth="1.200" />
    </svg>
    <svg width="30" height="28" viewBox="0 0 30 28" className="relative ml-[31px] shrink-0">
      <path d="M2 3h20v22H2z" fill="#8cc5e6" stroke="#4f8fb8" /><path d="M22 3h3v22h-3z" fill="#b5dcf0" stroke="#4f8fb8" strokeWidth=".7" />
      <circle cx="12" cy="14" r="9" fill="#f07a1c" stroke="#fff" strokeWidth=".8" />
      <path d="M9 8.500l9 5.500-9 5.500z" fill="#fff" />
    </svg>
    <div className="relative ml-[17px] mt-px flex gap-[2px]">
      <TaskButton>
        <svg width="30" height="30" viewBox="0 0 30 30"><circle cx="15" cy="15" r="14" fill="#f7cf1c" /><path d="M15 15L2.900 8A14 14 0 0 1 27.100 8z" fill="#dd3a28" /><path d="M15 1a14 14 0 0 1 12.100 7H15z" fill="#dd3a28" /><path d="M2.900 8L9 18.500l6 3L12 28.700A14 14 0 0 1 2.900 8z" fill="#3aa757" /><circle cx="15" cy="15" r="6.800" fill="#fff" /><circle cx="15" cy="15" r="5.200" fill="#2f6fc8" /></svg>
      </TaskButton>
      <div className="flex">
        <TaskButton active>
          <svg width="28" height="34" viewBox="0 0 28 34">
            <path d="M5 26l9 7 9-7v-5H5z" fill="#6f7ba6" opacity=".8" />
            <path d="M14 1l12 6v16l-12 7-12-7V7z" fill="#b4c3d6" />
            <path d="M14 1l12 6-12 6L2 7z" fill="#93a5bb" stroke="#dfe7f0" />
            <path d="M8.500 6.500L14 4l6 2.500L14 10z" fill="#34465f" />
            <path d="M11 6.500L14 5l3 1.500L14 8z" fill="#a9b9cb" />
            <path d="M3.500 9.500L13 14v13.500l-9.500-5.500z" fill="#1f3c66" />
            <path d="M24.500 9.500L15 14v13.500l9.500-5.500z" fill="#2a4a78" />
            <path d="M5.500 13.500l5.500 3v2l-5.500-3zM5.500 18.500l5.500 3v2l-5.500-3z" fill="#c5d4e6" />
            <path d="M22.500 13.500L17 16.500v2l5.500-3zM22.500 18.500l-5.500 3v2l5.500-3z" fill="#c5d4e6" />
          </svg>
        </TaskButton>
        <div className="h-[39px] w-[5px] rounded-r-[3px] border border-l-0 border-[#173f63] bg-[#a5cfe8]" />
      </div>
      <TaskButton>
        <svg width="30" height="30" viewBox="0 0 30 30"><circle cx="15" cy="15" r="14.500" fill="#f0eef8" stroke="#c9c6e2" /><path d="M6 8q3 0 5 2 4-1 8 0 2-2 5-2 .500 3 0 4.500 2 3 0 7Q21 23 15 23t-9-3.500q-2-4 0-7Q5.500 10 6 8z" fill="#52237a" /></svg>
      </TaskButton>
      <TaskButton>
        <svg width="32" height="32" viewBox="0 0 32 32"><path d="M2 22Q0 12 9 8t17 0q4 6 0 14-6 8-12 6 0-5-5-5-4 3-7-1z" fill="#eaf2f8" stroke="#8fb2c8" strokeWidth=".8" /><circle cx="15" cy="20" r="3" fill="#5badd8" /><circle cx="6" cy="18" r="2.500" fill="#e8502f" /><circle cx="11" cy="13" r="2.800" fill="#7cc142" /><circle cx="18" cy="10" r="3" fill="#f5b21f" /><path d="M27 4L17 31" stroke="#e08a2a" strokeWidth="2.600" /><path d="M24 1q4 0 8 3l-4 4-5-2z" fill="#b98d5a" /></svg>
      </TaskButton>
    </div>
    <div className="relative ml-auto flex h-full items-center text-white">
      <svg width="17" height="17" viewBox="0 0 17 17" className="mt-[-6px]"><circle cx="7" cy="7.500" r="6.500" fill="#5c9fd8" /><path d="M3 3q5-3 8 1l-3 4-3-1zM8 9l4-1-2 5z" fill="#8cc152" /><path d="M15 6l2 2-8 8-3 1 1-3z" fill="#f4d058" stroke="#a06a1c" strokeWidth=".6" /></svg>
      <span className="ml-[4px] mt-[-5px] w-[16px] font-['Liberation_Serif',serif] text-[21px] font-bold leading-[20px]">A</span>
      <span className="ml-[4px] mt-[-5px] w-[17px] font-['Noto_Sans_CJK_KR',sans-serif] text-[17px] leading-[20px]">漢</span>
      <svg width="16" height="16" viewBox="0 0 16 16" className="ml-[5px] mt-[-6px]"><circle cx="8" cy="8" r="7.300" fill="#1226a8" stroke="#d4d8ee" strokeWidth="1" /><path d="M5.700 6.200Q5.700 4 8 4t2.300 2Q10.300 7.300 8 8.500v1M8 11v1.600" fill="none" stroke="#fff" strokeWidth="1.600" /></svg>
      <svg width="9" height="20" viewBox="0 0 9 20" className="ml-[10px] mt-[-4px]"><path d="M2.500.5h5v3h-5zM.5 3.500h4v3h-4z" fill="#17467f" stroke="#fff" /><path d="M1.500 14h5L4 17z" fill="#fff" /></svg>
      <svg width="8" height="5" viewBox="0 0 8 5" className="ml-[10px] mt-[3px]"><path d="M0 4.500L4 0l4 4.500z" fill="#e6eef5" /></svg>
      <svg width="16" height="16" viewBox="0 0 16 16" className="ml-[12px] mt-[3px]"><path d="M1.500 1v14" stroke="#fff" strokeWidth="1.600" /><path d="M3 2h5v2h6v5H9V8H3z" fill="#fff" /></svg>
      <svg width="16" height="18" viewBox="0 0 16 18" className="ml-[8px] mt-[2px]"><path d="M6 15H2V3h2V1h4v2h3" fill="none" stroke="#fff" strokeWidth="1.500" /><path d="M8 3v4M12 3v4" stroke="#fff" strokeWidth="1.500" /><path d="M6 6h9v4q-1 3-4 3v4H9v-4q-3-1-3-3z" fill="#fff" /></svg>
      <svg width="17" height="17" viewBox="0 0 17 17" className="ml-[8px] mt-[3px]"><path d="M6 4h9v8H5M7 14.500h6M1 1v4q0 2 2 2t2-2V1M3 7v8h3" fill="none" stroke="#fff" strokeWidth="1.400" /><path d="M1 2h4v4H1z" fill="#fff" /></svg>
      <svg width="18" height="18" viewBox="0 0 18 18" className="ml-[6px] mt-[2px]"><path d="M1 6h3l4-5v14l-4-5H1z" fill="#fff" /><circle cx="12" cy="12" r="5" fill="#e3281e" stroke="#fff" strokeWidth=".8" /><path d="M9 9l6 6" stroke="#fff" strokeWidth="1.500" /></svg>
      <div className="ml-[13px] flex w-[76px] flex-col items-center whitespace-nowrap font-['Open_Sans','Noto_Sans_CJK_KR',sans-serif] text-[12px] leading-[17px] tracking-[0.35px]">
        <span>오후 5:07</span>
        <span>2015-03-27</span>
      </div>
      <div className="ml-[6px] h-full w-[15px] border border-[#0d2038] bg-[linear-gradient(160deg,#8297ad,#2f4f73_40%,#1c3a5e)]" />
    </div>
  </div>
);

export default function App() {
  return (
    <div className="relative h-[900px] w-[1600px] overflow-hidden bg-[linear-gradient(90deg,#1a9be6_0,#39cfee_18%,#1aa0d8_30%,#0b5cae_60%,#045ec0_100%)]">
      <div className="absolute inset-0 bg-[radial-gradient(ellipse_640px_800px_at_1200px_760px,#0878e8_0,#006bd8_22%,#0052af_58%,#014089_90%,#013f86_100%)] [mask-image:linear-gradient(90deg,transparent_780px,#000_1250px)]" />
      <div className="absolute left-0 top-0 h-[40px] w-[1400px] bg-[linear-gradient(90deg,#063a86,#0a4ea6_60%,transparent)]" />
      <ChromeWindow />
      <VMWindow />
      <Taskbar />
      <svg width="14" height="20" viewBox="0 0 14 20" className="absolute left-[737px] top-[58px]">
        <path d="M1 .8v14.500l3.500-3.200 2.500 6 2.600-1.100L7 11.200h5z" fill="#000" stroke="#fff" strokeWidth="1" />
      </svg>
    </div>
  );
}
